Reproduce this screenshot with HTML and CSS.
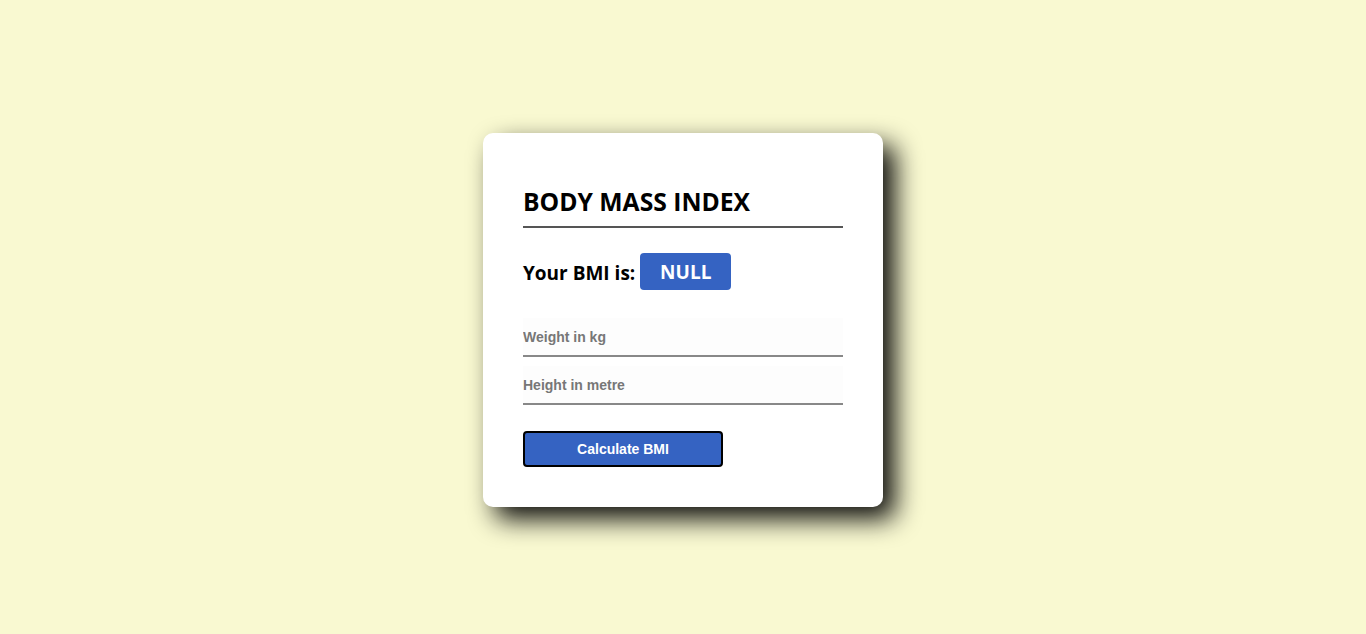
FILE: index.html
```html
<!DOCTYPE html>
<html>
<head>
<meta charset="utf-8">
<link rel="stylesheet" href="styles.css">
</head>
<body>
<main class="page">
  <section class="card">
    <h1 class="title">BODY MASS INDEX</h1>
    <div class="result">
      <span class="result-label">Your BMI is:</span>
      <span class="result-value">NULL</span>
    </div>
    <input class="field" type="text" placeholder="Weight in kg">
    <input class="field" type="text" placeholder="Height in metre">
    <button class="calc" type="button">Calculate BMI</button>
  </section>
</main>
</body>
</html>
```
FILE: styles.css
```css
html, body {
  margin: 0;
  padding: 0;
}
body {
  background: #f9f9d1;
  font-family: "Open Sans", "Noto Sans", sans-serif;
}
.page {
  height: 634px;
  display: flex;
  align-items: center;
  justify-content: center;
}
.card {
  box-sizing: border-box;
  width: 400px;
  height: 374px;
  margin-top: 6px;
  background: #fff;
  border-radius: 10px;
  padding: 53px 40px 40px;
  box-shadow: 12px 12px 26px rgba(0, 0, 0, 0.95);
  display: flex;
  flex-direction: column;
}
.title {
  margin: 0;
  font-size: 24.7px;
  font-weight: 700;
  color: #000;
  line-height: 32px;
  padding-bottom: 8px;
  border-bottom: 2px solid #555;
  letter-spacing: 0;
}
.result {
  display: flex;
  align-items: center;
  margin-top: 25px;
}
.result-label {
  font-size: 19px;
  font-weight: 700;
  color: #000;
  position: relative;
  top: 1px;
}
.result-value {
  margin-left: 5px;
  width: 91px;
  height: 37px;
  border-radius: 4px;
  background: #3563c2;
  color: #fff;
  font-size: 19px;
  font-weight: 700;
  display: flex;
  align-items: center;
  justify-content: center;
}
.field {
  box-sizing: border-box;
  width: 320px;
  height: 39px;
  border: none;
  border-bottom: 2px solid #888;
  background: #fdfdfd;
  padding: 0;
  font-family: "Liberation Sans", Arial, sans-serif;
  font-size: 14px;
  font-weight: 700;
  outline: none;
}
.field::placeholder {
  color: #777;
}
.field:first-of-type {
  margin-top: 28px;
}
.field + .field {
  margin-top: 9px;
}
.calc {
  box-sizing: border-box;
  margin-top: 26px;
  width: 200px;
  height: 36px;
  border: 2px solid #000;
  border-radius: 4px;
  background: #3563c2;
  color: #fff;
  font-family: "Liberation Sans", Arial, sans-serif;
  font-size: 14px;
  font-weight: 700;
  padding: 0;
}
```
